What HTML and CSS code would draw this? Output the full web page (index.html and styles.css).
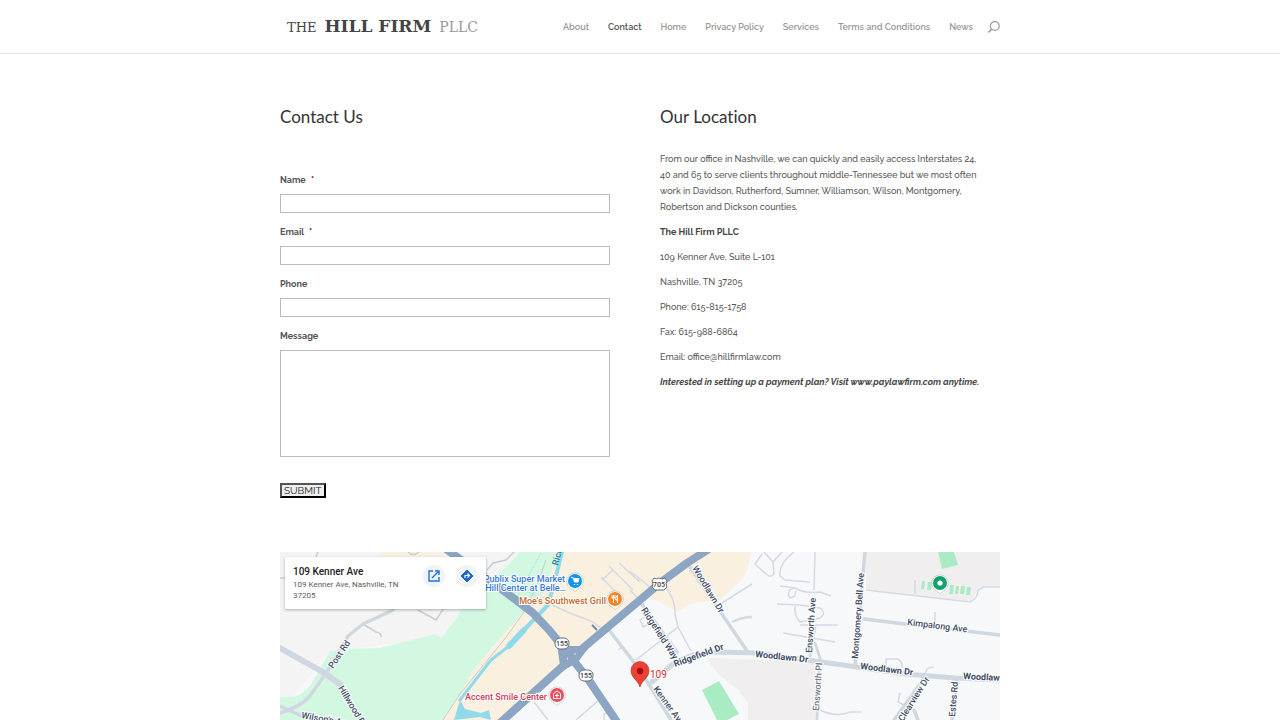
FILE: index.html
```html
<!DOCTYPE html>
<html lang="en">
<head>
<meta charset="utf-8">
<meta name="viewport" content="width=device-width, initial-scale=1">
<title>Contact | The Hill Firm PLLC</title>
<link rel="stylesheet" href="styles.css">
</head>
<body>
<header class="site-header">
  <div class="container header-row">
    <a class="logo" href="#"><span class="logo-the">THE</span><span class="logo-name">HILL FIRM</span><span class="logo-pllc">PLLC</span></a>
    <nav class="nav">
      <a href="#">About</a>
      <a class="current" href="#">Contact</a>
      <a href="#">Home</a>
      <a href="#">Privacy Policy</a>
      <a href="#">Services</a>
      <a href="#">Terms and Conditions</a>
      <a href="#">News</a>
      <button class="search" type="button" aria-label="Search">
        <svg width="12" height="12" viewBox="0 0 12 12" fill="none" stroke="#999" stroke-width="1.200"><circle cx="6.800" cy="5" r="4.400"/><path d="M3.600 8.200L.5 11.400" stroke-width="1.600"/></svg>
      </button>
    </nav>
  </div>
</header>
<main class="container">
  <div class="columns">
    <section>
      <h1>Contact Us</h1>
      <form class="form">
        <div class="field"><label for="name">Name <span class="req">*</span></label><input id="name" type="text" required></div>
        <div class="field"><label for="email">Email <span class="req">*</span></label><input id="email" type="email" required></div>
        <div class="field"><label for="phone">Phone</label><input id="phone" type="tel"></div>
        <div class="field"><label for="message">Message</label><textarea id="message"></textarea></div>
        <button class="submit" type="submit">SUBMIT</button>
      </form>
    </section>
    <section>
      <h1>Our Location</h1>
      <div class="location">
        <p>From our office in Nashville, we can quickly and easily access Interstates 24, 40 and 65 to serve clients throughout middle-Tennessee but we most often work in Davidson, Rutherford, Sumner, Williamson, Wilson, Montgomery, Robertson and Dickson counties.</p>
        <p><strong>The Hill Firm PLLC</strong></p>
        <p>109 Kenner Ave, Suite L-101</p>
        <p>Nashville, TN 37205</p>
        <p>Phone: 615-815-1758</p>
        <p>Fax: 615-988-6864</p>
        <p>Email: office@hillfirmlaw.com</p>
        <p><strong><em>Interested in setting up a payment plan? Visit www.paylawfirm.com anytime.</em></strong></p>
      </div>
    </section>
  </div>
  <section class="map" aria-label="Map of 109 Kenner Ave">
    <svg class="map-canvas" viewBox="280 552 720 168">
      <defs>
        <g id="pin-back"><path d="M0 10.500L-5 6.800A8.300 8.300 0 1 1 5 6.800z" fill="#fff" stroke="#a9adb3" stroke-width=".5"/></g>
      </defs>
      <rect x="280" y="552" width="720" height="168" fill="#f7f8f9"/>
      <path fill="#f4f4f4" d="M280 552H520L441 638 330 651 293 697H280z"/>
      <!-- park and commercial areas -->
      <path fill="#d3f8e2" d="M280 697H293Q302 695 310 686L330 651 345 649 380 648 435 634 441 638 456 619 470 595 503 570 520 552H558L549 590 523 613 490 650 467 683 443 720H280z"/>
      <path fill="#faf0df" d="M382 552H440L447 557 430 560H378zM556 552H751L748 568 743 578 720 600 693 603 677 612 660 602 645 597 578 657 503 720H443L467 683 471 673 485 656 523 613 546 590z"/>
      <!-- school grounds -->
      <path fill="#f0eeef" d="M866 552H1000V587H980L970 602 866 589zM706 658L820 662 816 720H748L748 703 738 690 718 674z"/>
      <g fill="#a9ebc2"><path d="M702 690L719 681 739 714 727 720H717zM938 552H954L958 565 942 569z"/><path d="M922 581h3l-1 8h-3zM928 582h4l-1 8h-4zM950 585h4l-1 9h-4zM956 586h3l-1 8h-3zM961 586h4l-1 8h-4zM967 587h4l-1 8h-4z"/></g>
      <!-- river -->
      <g fill="none" stroke="#91daeb" stroke-linecap="round" stroke-linejoin="round"><path stroke-width="4" d="M562 552L555 580 548 605 523 631"/><path stroke-width="6" d="M524 630L509 646"/><path stroke-width="3" d="M509 646L491 660 470 687 460 700"/></g>
      <path fill="#91daeb" d="M460 700L465 709 481 713 489 710 491 720 480 717 454 720z"/>
      <path fill="none" stroke="#c8ceca" stroke-width="1" d="M546 560L535 590 524 612 507 636 486 662 460 694 443 720"/>
      <path fill="none" stroke="#b9dccb" stroke-width="1" stroke-dasharray="2 1" d="M526 591L542 598 553 593M517 597L541 553"/>
      <path fill="none" stroke="#c4ced3" stroke-width="1.5" d="M487 570L493 563 506 560 514 552M418 610L436 620 444 608M363 624L376 632Q382 633 381 637M318 552L315 559M280 578H286M408 552Q413 557 419 552"/>
      <!-- side streets -->
      <g fill="none" stroke="#d3dae3" stroke-width="1.500" stroke-linejoin="round">
        <path d="M552 605L570 613 593 622 607 633M601 577L624 600M609 566L633 590M619 563L640 582M602 580L613 570M534 702L548 720M576 720L599 700M604 720V714L610 712M618 650L623 646"/>
        <path d="M630 571L650 587M630 590L644 605M664 584Q676 600 675 614L678 627 691 651M678 627L636 660M640 620L646 616 649 624 643 627z"/>
        <path d="M755 564L766 574Q771 579 774 573L773 562 764 552M755 564L762 554M773 562L782 552M794 552Q779 563 780 576L785 580 810 582M815 552L814 590M722 603L752 584"/>
        <path d="M780 586L795 588Q805 594 820 592L831 596M795 588Q785 590 790 598 796 597 796 591M777 604L800 605 820 608Q827 613 820 618L800 622Q794 616 795 606M800 625L838 625M783 633L835 642"/>
        <path d="M915 594V580M866 590L970 602Q978 598 978 590L984 587H1000M935 622V612M886 669V659H897Q903 661 902 668M926 676Q924 667 934 667M900 693L898 702 906 706M820 710Q836 718 850 712H861"/>
        <path stroke-width="2.500" d="M732 622Q742 617 752 617"/>
      </g>
      <g fill="none" stroke="#cfd7e0" stroke-width="3.500" stroke-linejoin="round" stroke-linecap="round">
        <path d="M393 610L363 624 348 636 327 672 309 697Q300 707 280 713"/><path stroke-width="6" d="M280 648L323 672 340 684"/><path d="M340 684L361 720M280 706L304 717"/>
        <path d="M688 564L747 651M609 630L640 670 671 720M641 603L677 652"/><path stroke-width="5" d="M652 682L673 664Q692 652 720 652L756 653 850 666 905 674 955 678 1000 680"/>
        <path d="M865 552L855 666M864 619L905 624 1000 635M957 679L952 720M925 677L894 720M914 710L918 720"/><path stroke-width="2.500" d="M815 628L810 656M815 643L820 658 817 720"/>
      </g>
      <!-- highways -->
      <g fill="none" stroke="#8ba5c2" stroke-width="8" stroke-linejoin="round"><path d="M446 549L500 588 533 613 550 631 573 660 588 679 617 722"/><path d="M500 723L563 666 583 648 640 600 660 583 687 563 709 549"/></g>
      <path fill="#8ba5c2" d="M556 638L563 646H590L578 662 561 672z"/>
      <path stroke="#7188a0" stroke-width="2" d="M592 625l5 5"/><path fill="#fff" d="M574 654l2-1-1 2zM567 659l1-2v3z"/>
      <!-- road shields -->
      <g fill="#fff" stroke="#66717d" stroke-width="1"><rect x="555" y="638" width="14" height="11" rx="5"/><rect x="579" y="670" width="14" height="11" rx="5"/><path d="M654 578Q656 580 659 578 662 580 665 578L667 581Q665 584 667 587L664 590H655L652 587Q654 584 652 581z"/></g>
      <g class="shield-text"><text x="562" y="646">155</text><text x="586" y="678">155</text><text x="659" y="587">705</text></g>
      <!-- street names -->
      <g class="street">
        <text transform="translate(333 669) rotate(-56)">Post Rd</text>
        <text transform="translate(338 688) rotate(59)">Hillwood Blvd</text>
        <text transform="translate(301 718) rotate(10)">Wilson's Ave</text>
        <text transform="translate(692 568) rotate(59)">Woodlawn Dr</text>
        <text transform="translate(641 610) rotate(57)">Ridgefield Way</text>
        <text class="major" transform="translate(675 667) rotate(-20)">Ridgefield Dr</text>
        <text class="major" transform="translate(755 657) rotate(6)">Woodlawn Dr</text>
        <text transform="translate(653 689) rotate(54)">Kenner Ave</text>
        <text transform="translate(812 653) rotate(-86)">Ensworth Ave</text>
        <text class="minor" transform="translate(819 711) rotate(-86)">Ensworth Pl</text>
        <text transform="translate(858 659) rotate(-86)">Montgomery Bell Ave</text>
        <text transform="translate(907 625) rotate(7)">Kimpalong Ave</text>
        <text class="major" transform="translate(860 669) rotate(7)">Woodlawn Dr</text>
        <text class="major" transform="translate(963 679) rotate(3)">Woodlawn Dr</text>
        <text transform="translate(903 722) rotate(-58)">Clearview Dr</text>
        <text transform="translate(955 717) rotate(-85)">Estes Rd</text>
        <text class="water" transform="translate(558 566) rotate(-76)">Rich</text>
      </g>
      <!-- places -->
      <g class="place"><text fill="#3979d9" x="565" y="582">Publix Super Market</text><text fill="#3979d9" x="566" y="591">Hill Center at Belle…</text><text fill="#c56a2c" x="606" y="604">Moe's Southwest Grill</text><text fill="#ce4058" x="547" y="700">Accent Smile Center</text></g>
      <g transform="translate(575 581)"><use href="#pin-back"/><circle r="7" fill="#1196ee"/><path d="M-4-3.500h2L-.500 1H3L4-2.500H-1.500" fill="#fff" stroke="#fff"/><path d="M-.500 3v1M2.500 3v1" stroke="#fff" stroke-width="1.500"/></g>
      <g transform="translate(615 599)"><use href="#pin-back"/><circle r="7" fill="#f18628"/><path d="M-3-4v3h3v-3M-1.500-4V4M2.500 4V-4Q.500-2 .800 1h2" fill="none" stroke="#fff"/></g>
      <g transform="translate(557 695)"><use href="#pin-back"/><circle r="7" fill="#ed4c5c"/><path d="M-3.500-1.500L0-4 3.500-1.500V3.500H-3.500zM0-1.500v4M-2 .5h4" fill="none" stroke="#fff"/></g>
      <g transform="translate(940 583)"><use href="#pin-back"/><circle r="7" fill="#13a06f"/><circle r="2.600" fill="#fff"/></g>
      <path fill="#ea4335" stroke="#b3261e" stroke-width=".6" d="M640 687C638 680 631 678 631 670.500a9 9 0 0 1 18 0C649 678 642 680 640 687z"/><circle cx="640" cy="671" r="3.200" fill="#a50e0e"/>
      <text class="pin-label" x="650" y="678">109</text>
    </svg>
    <div class="map-card">
      <div class="map-address"><strong>109 Kenner Ave</strong><span>109 Kenner Ave, Nashville, TN 37205</span></div>
      <a class="map-action" href="#" aria-label="Open in Maps"><svg width="12" height="12" viewBox="0 0 12 12" fill="none" stroke="#1a73e8" stroke-width="1.400"><path d="M5 1H1v10h10V7M7 1h4v4M11 1L4 8"/></svg></a>
      <a class="map-action" href="#" aria-label="Directions"><svg width="14" height="14" viewBox="0 0 14 14"><path fill="#1967d2" stroke="#1967d2" stroke-linejoin="round" d="M7 1l6 6-6 6-6-6z"/><path d="M5 9V6.500h4M7.500 4.500l2 2-2 2" fill="none" stroke="#fff" stroke-width="1.200"/></svg></a>
    </div>
  </section>
</main>
</body>
</html>
```
FILE: styles.css
```css
* { box-sizing: border-box; }
body {
  margin: 0;
  background: #fff;
  color: #555;
  font: 500 9px/16px Raleway, Lato, "Open Sans", sans-serif;
}
.container { width: 90%; max-width: 720px; margin: 0 auto; }
.site-header { border-bottom: 1px solid #e6e6e6; }
.header-row { display: flex; align-items: center; justify-content: space-between; min-height: 53px; }
.logo {
  display: flex;
  align-items: baseline;
  gap: 8px;
  padding-left: 7px;
  color: #444;
  font-family: "DejaVu Serif", serif;
  font-weight: 400;
  line-height: 20px;
  text-decoration: none;
  white-space: nowrap;
}
.logo-the { font-size: 13px; }
.logo-name { font-size: 17px; font-weight: 700; }
.logo-pllc { font-size: 14px; color: #999; }
.nav { display: flex; align-items: center; gap: 19px; font-weight: 600; white-space: nowrap; }
.nav a { color: #999; text-decoration: none; }
.nav .current { color: #555; }
.search { display: flex; padding: 0; border: 0; background: none; margin-left: -4px; }
.columns { display: grid; grid-template-columns: 1fr 1fr; gap: 40px; padding: 52px 0 54px; }
h1 { margin: 0; color: #333; font: 400 17px/22px Lato, sans-serif; font-variant-ligatures: none; }
.form { display: flex; flex-direction: column; gap: 11px; width: 97%; padding-top: 44px; }
.field { display: flex; flex-direction: column; gap: 6px; }
label { font-weight: 700; }
.req { margin-left: 3px; color: #790000; }
input, textarea { width: 100%; height: 19px; padding: 2px; border: 1px solid #bbb; border-radius: 0; background: #fff; font: inherit; }
textarea { display: block; height: 107px; resize: none; }
.submit {
  align-self: flex-start;
  margin-top: 15px;
  padding: 0 2px;
  border: 2px outset #000;
  background: #efefef;
  color: #222;
  font: 10px/11px Raleway, Lato, sans-serif;
}
.location { display: flex; flex-direction: column; gap: 9px; padding: 23px 16px 0 0; }
.location p { margin: 0; }
.location strong { color: #444; font-weight: 700; }
.location em { white-space: nowrap; }
.map { position: relative; overflow: hidden; }
.map-canvas { display: block; width: 100%; font-family: Roboto, sans-serif; }
.street { fill: #414e66; font-size: 9px; font-weight: 500; stroke: #fff; stroke-width: 2px; paint-order: stroke; }
.street .major { font-weight: 700; }
.street .minor { fill: #6f7782; }
.street .water { fill: #16809a; stroke: none; }
.shield-text { fill: #3c4043; font-size: 7px; font-weight: 500; text-anchor: middle; }
.place { font-size: 9px; font-weight: 500; text-anchor: end; stroke: #fff; stroke-width: 2px; paint-order: stroke; }
.pin-label { fill: #cf3030; font-size: 10px; font-weight: 400; stroke: #fff; stroke-width: 2px; paint-order: stroke; }
.map-card {
  position: absolute;
  top: 5px;
  left: 5px;
  display: flex;
  gap: 11px;
  width: 201px;
  min-height: 52px;
  padding: 8px;
  border-radius: 1px;
  background: #fff;
  box-shadow: 0 1px 3px rgba(0, 0, 0, .3);
  font-family: Roboto, sans-serif;
  font-weight: 400;
}
.map-address { flex: 1; color: #5b5b5b; font-size: 8px; line-height: 11px; }
.map-address strong { display: block; color: #222; font-size: 10px; font-weight: 500; line-height: 14px; }
.map-address span { display: block; }
.map-action { display: flex; align-items: center; justify-content: center; width: 22px; height: 22px; border-radius: 50%; background: #f1f3f4; }
```
